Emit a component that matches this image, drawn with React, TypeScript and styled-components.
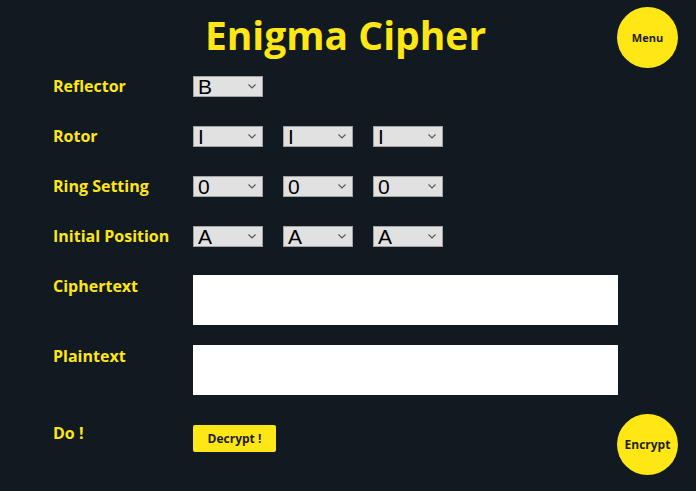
import { FC } from "react";
import styled, { createGlobalStyle } from "styled-components";

const GlobalStyle = createGlobalStyle`
  html, body {
    margin: 0;
    padding: 0;
    background: #111921;
  }
  body {
    font-family: "Open Sans", "DejaVu Sans", sans-serif;
  }
`;

const Page = styled.div`
  position: relative;
  width: 696px;
  height: 491px;
  overflow: hidden;
  background: #111921;
`;

const Title = styled.h1`
  margin: 0;
  padding: 8px 5px 0 0;
  text-align: center;
  font-size: 39px;
  font-weight: 700;
  line-height: 54px;
  color: #ffe615;
`;

const CircleButton = styled.button<{ $top: number; $size: number }>`
  position: absolute;
  top: ${(p) => p.$top}px;
  left: 617px;
  width: 61px;
  height: 61px;
  border-radius: 50%;
  border: none;
  background: #ffe615;
  color: #1d1d1d;
  font-family: "Open Sans", sans-serif;
  font-weight: 700;
  font-size: ${(p) => p.$size}px;
  padding: 0;
  cursor: pointer;
`;

const Form = styled.div`
  display: flex;
  flex-direction: column;
  padding: 13px 0 0 53px;
`;

const Row = styled.div<{ $gap: number }>`
  display: flex;
  align-items: flex-start;
  margin-bottom: ${(p) => p.$gap}px;
`;

const Label = styled.label`
  width: 140px;
  flex-shrink: 0;
  font-size: 16px;
  font-weight: 700;
  line-height: 22px;
  color: #ffe615;
`;

const Selects = styled.div`
  display: flex;
  gap: 20px;
  padding-top: 1px;
`;

const SelectWrap = styled.div`
  position: relative;
  width: 70px;
  height: 21px;
`;

const Select = styled.select`
  appearance: none;
  -webkit-appearance: none;
  width: 70px;
  height: 21px;
  margin: 0;
  padding: 0 0 0 4px;
  font-family: "Liberation Sans", Arial, sans-serif;
  font-size: 21px;
  line-height: 19px;
  background: #e1e1e1;
  color: #000;
  border: 1px solid #a3a3a3;
  border-radius: 0;
  box-sizing: border-box;
  outline: none;
`;

const Chevron = styled.svg`
  position: absolute;
  right: 7px;
  top: 8px;
  pointer-events: none;
`;

const TextBox = styled.textarea`
  width: 425px;
  height: 50px;
  border: none;
  background: #fff;
  padding: 0;
  resize: none;
  box-sizing: border-box;
`;

const ActionButton = styled.button`
  margin-top: 3px;
  width: 83px;
  height: 27px;
  border: none;
  border-radius: 2px;
  background: #ffe615;
  color: #1d1d1d;
  font-family: "Open Sans", sans-serif;
  font-size: 12px;
  font-weight: 700;
  padding: 0;
`;

const letters = "ABCDEFGHIJKLMNOPQRSTUVWXYZ".split("");
const rotors = ["I", "II", "III", "IV", "V"];
const rings = Array.from({ length: 26 }, (_, i) => String(i));

const Dropdown: FC<{ options: string[]; value: string }> = ({ options, value }) => (
  <SelectWrap>
    <Select defaultValue={value}>
      {options.map((o) => (
        <option key={o}>{o}</option>
      ))}
    </Select>
    <Chevron width="8" height="5" viewBox="0 0 8 5">
      <path d="M0.5 0.5 L4 4 L7.5 0.5" fill="none" stroke="#555" strokeWidth="1.1" />
    </Chevron>
  </SelectWrap>
);

const SelectGroup: FC<{ options: string[] }> = ({ options }) => (
  <Selects>
    {[0, 1, 2].map((i) => (
      <Dropdown key={i} options={options} value={options[0]} />
    ))}
  </Selects>
);

export default function App() {
  return (
    <Page>
      <GlobalStyle />
      <Title>Enigma Cipher</Title>
      <CircleButton $top={7} $size={11}>Menu</CircleButton>
      <Form>
        <Row $gap={28}>
          <Label>Reflector</Label>
          <Selects>
            <Dropdown options={["A", "B", "C"]} value="B" />
          </Selects>
        </Row>
        <Row $gap={28}>
          <Label>Rotor</Label>
          <SelectGroup options={rotors} />
        </Row>
        <Row $gap={28}>
          <Label>Ring Setting</Label>
          <SelectGroup options={rings} />
        </Row>
        <Row $gap={28}>
          <Label>Initial Position</Label>
          <SelectGroup options={letters} />
        </Row>
        <Row $gap={20}>
          <Label>Ciphertext</Label>
          <TextBox />
        </Row>
        <Row $gap={27}>
          <Label>Plaintext</Label>
          <TextBox />
        </Row>
        <Row $gap={0}>
          <Label>Do !</Label>
          <ActionButton>Decrypt !</ActionButton>
        </Row>
      </Form>
      <CircleButton $top={414} $size={12}>Encrypt</CircleButton>
    </Page>
  );
}
